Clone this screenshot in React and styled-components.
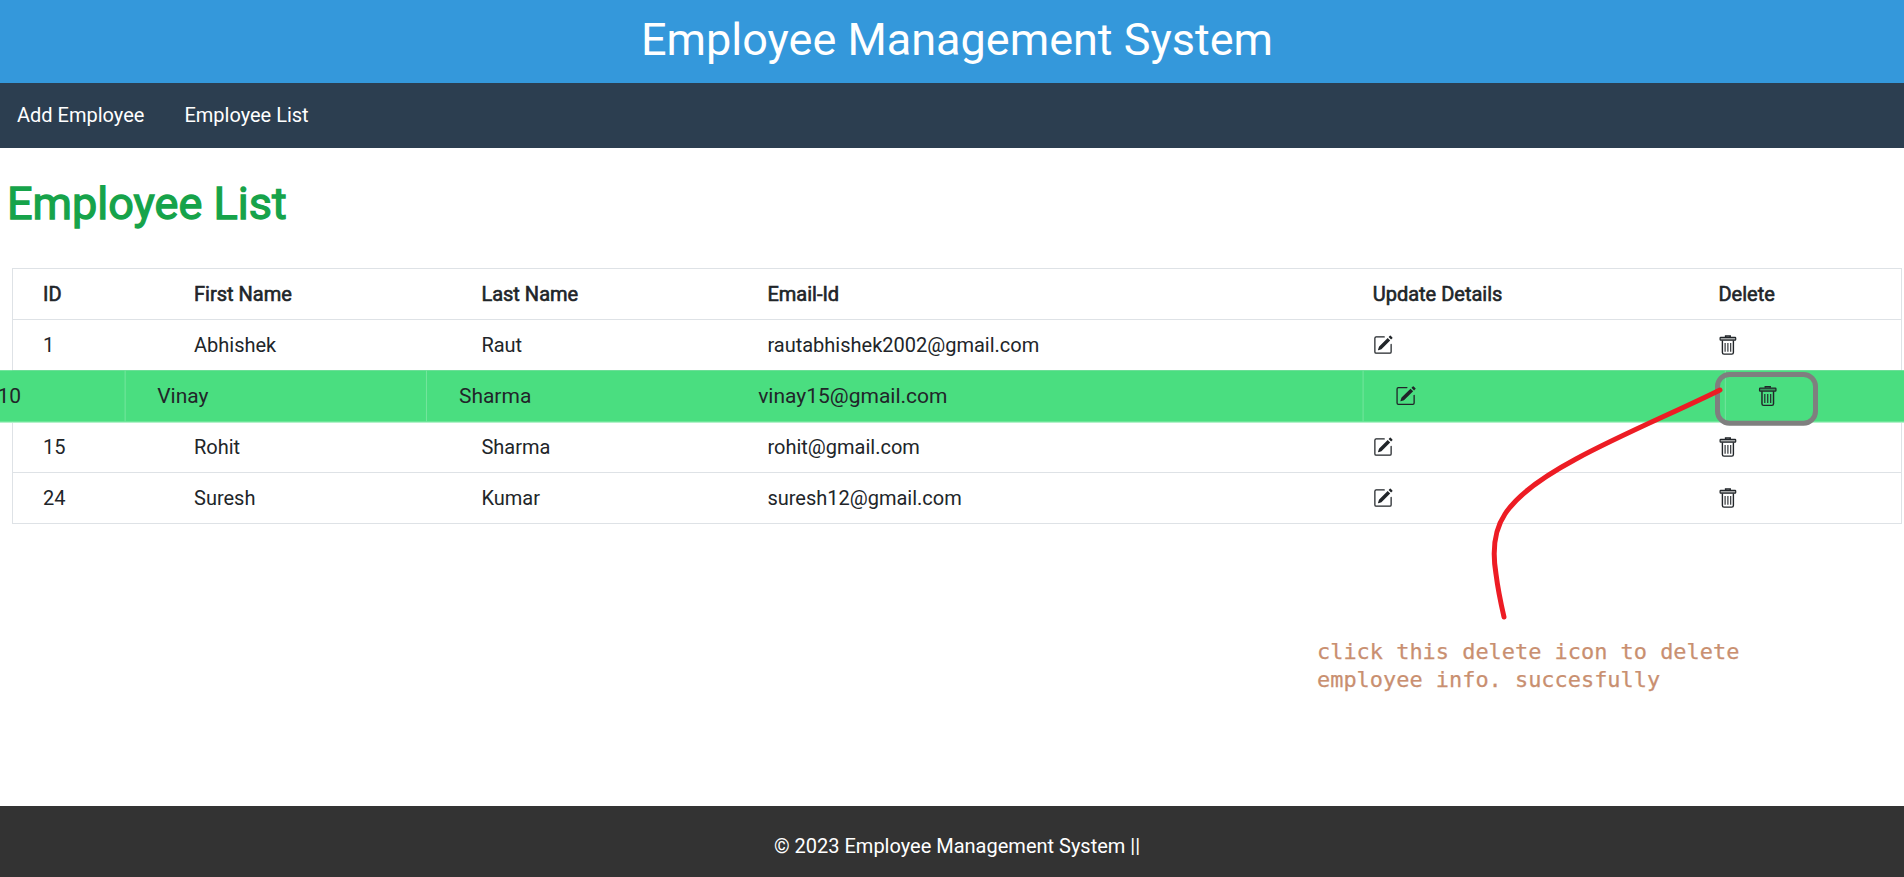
import React from "react";
import styled, { createGlobalStyle, css } from "styled-components";
import { BsPencilSquare } from "react-icons/bs";

const GlobalStyle = createGlobalStyle`
  * { box-sizing: border-box; }
  body {
    margin: 0;
    background: #fff;
    color: #212529;
    font-family: Roboto, "Liberation Sans", sans-serif;
    font-size: 20px;
    line-height: 30px;
    overflow: hidden;
  }
`;

const Page = styled.div`
  position: relative;
  display: flex;
  flex-direction: column;
  height: 877px;
  overflow: hidden;
`;

const Header = styled.header`
  height: 83px;
  padding: 13px 0 0 10px;
  background: #3498db;
  color: #fff;
  text-align: center;
`;

const Title = styled.h1`
  margin: 0;
  font-size: 45px;
  font-weight: 400;
  line-height: 54px;
`;

const Nav = styled.nav`
  display: flex;
  gap: 40px;
  height: 65px;
  padding: 17px 17px 0;
  background: #2c3e50;
`;

const NavLink = styled.a`
  color: #fff;
  text-decoration: none;
`;

const Main = styled.main`
  flex: 1;
`;

const Heading = styled.h2`
  margin: 28px 0 37px 7px;
  color: #16a34a;
  font-size: 45px;
  font-weight: 400;
  line-height: 55px;
  -webkit-text-stroke: 1.3px #16a34a;
`;

const Table = styled.div`
  width: 1890px;
  margin-left: 12px;
  border: 1px solid #dee2e6;
  border-bottom: 0;
`;

const Row = styled.div`
  display: grid;
  grid-template-columns: 151px 287.4px 286px 605.3px 345.8px 1fr;
  height: 51px;
  border-bottom: 1px solid #dee2e6;
  ${(p) =>
    p.$head &&
    css`
      -webkit-text-stroke: 0.6px #212529;
    `}
  ${(p) =>
    p.$active &&
    css`
      position: relative;
      background: #4ade80;
      border-bottom-color: #c9f5d8;
      transform: scale(1.05, 1.03);
      transform-origin: 939px 50%;
    `}
`;

const Cell = styled.div`
  display: flex;
  align-items: center;
  padding-left: 30px;
  border-left: ${(p) => (p.$divided ? "1px solid #72e59c" : "0")};
`;

const Footer = styled.footer`
  height: 71px;
  padding: 25px 0 0 10px;
  background: #333;
  color: #fff;
  text-align: center;
`;

const Marks = styled.svg`
  position: absolute;
  inset: 0;
  pointer-events: none;
`;

const Note = styled.p`
  position: absolute;
  left: 1317px;
  top: 638px;
  margin: 0;
  color: #c98f70;
  font: 21.93px/28px "DejaVu Sans Mono", monospace;
  white-space: pre;
  -webkit-text-stroke: 0.25px #c98f70;
`;

const TrashIcon = () => (
  <svg width="19" height="20" viewBox="-1.4 0 19 20" fill="none" stroke="currentColor">
    <path d="M6.2 2V1h4.6V2" strokeWidth="1.5" />
    <rect x="0.7" y="2.4" width="15.6" height="2.8" rx="0.6" strokeWidth="1.2" fill="currentColor" fillOpacity="0.4" />
    <path d="M3 5.5v12q0 1.6 1.6 1.6h7.8q1.6 0 1.6-1.6v-12" strokeWidth="1.4" />
    <path d="M5.7 8v8.7M8.5 8v8.7M11.3 8v8.7" strokeWidth="1.1" />
  </svg>
);

const employees = [
  { id: 1, first: "Abhishek", last: "Raut", email: "rautabhishek2002@gmail.com" },
  { id: 10, first: "Vinay", last: "Sharma", email: "vinay15@gmail.com", active: true },
  { id: 15, first: "Rohit", last: "Sharma", email: "rohit@gmail.com" },
  { id: 24, first: "Suresh", last: "Kumar", email: "suresh12@gmail.com" },
];

const columns = ["ID", "First Name", "Last Name", "Email-Id", "Update Details", "Delete"];

export default function App() {
  return (
    <Page>
      <GlobalStyle />
      <Header>
        <Title>Employee Management System</Title>
      </Header>
      <Nav>
        <NavLink>Add Employee</NavLink>
        <NavLink>Employee List</NavLink>
      </Nav>
      <Main>
        <Heading>Employee List</Heading>
        <Table>
          <Row $head>
            {columns.map((c) => (
              <Cell key={c}>{c}</Cell>
            ))}
          </Row>
          {employees.map((e) => (
            <Row key={e.id} $active={e.active}>
              <Cell>{e.id}</Cell>
              <Cell $divided={e.active}>{e.first}</Cell>
              <Cell $divided={e.active}>{e.last}</Cell>
              <Cell>{e.email}</Cell>
              <Cell $divided={e.active}>
                <BsPencilSquare size={20} />
              </Cell>
              <Cell $divided={e.active}>
                <TrashIcon />
              </Cell>
            </Row>
          ))}
        </Table>
      </Main>
      <Footer>© 2023 Employee Management System ||</Footer>
      <Marks width="1904" height="877" viewBox="0 0 1904 877" fill="none">
        <rect x="1717.5" y="374.5" width="98" height="48.7" rx="12" stroke="#7f7f7f" strokeWidth="5" />
        <path
          d="M1720 390 C1680 410 1620 435 1576 459 C1548 474 1518 494 1505 514 C1493 532 1493 556 1496 574 C1498 590 1501 604 1504 617"
          stroke="#ed1c24"
          strokeWidth="5"
          strokeLinecap="round"
          strokeLinejoin="round"
        />
      </Marks>
      <Note>{"click this delete icon to delete\nemployee info. succesfully"}</Note>
    </Page>
  );
}
